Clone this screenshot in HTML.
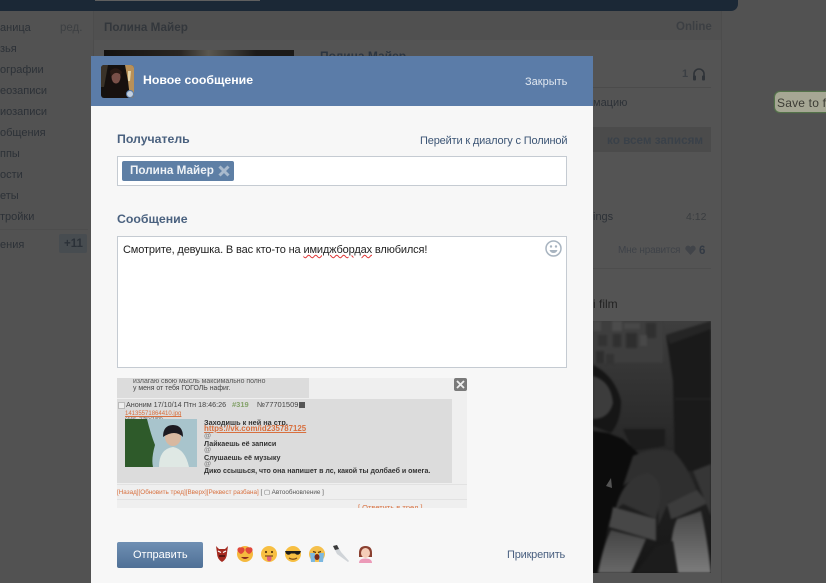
<!DOCTYPE html>
<html><head><meta charset="utf-8">
<style>
html,body{margin:0;padding:0;background:#525252}
#p{position:relative;width:826px;height:583px;overflow:hidden;background:#525252;font-family:"Liberation Sans",sans-serif;font-size:11px;color:#333}
#p div,#p span.a{position:absolute;white-space:nowrap}
.s{color:#2c3137;font-size:11px;line-height:14px}
.b{font-weight:bold}
.m{line-height:12px;white-space:nowrap}
</style></head><body>
<div id="p">
<!-- background page -->
<div style="left:0;top:0;width:738px;height:11px;background:#1b2836;border-radius:0 0 7px 0"></div>
<div style="left:95px;top:0;width:165px;height:1px;background:#5f5f5f"></div>
<div style="left:93px;top:11px;width:629px;height:572px;background:#545454;border-right:1px solid #4c4c4c;border-left:1px solid #4c4c4c;box-sizing:border-box"></div>
<div style="left:94px;top:11px;width:627px;height:29px;background:#505050"></div>
<div class="b" style="left:104px;top:20px;color:#33373c;font-size:11.700px;line-height:15px">Полина Майер</div>
<div class="b" style="left:676px;top:20px;color:#3c3f43;font-size:11.500px;line-height:15px">Online</div>
<div style="left:104px;top:50px;width:190px;height:10px;background:linear-gradient(90deg,#141210,#2a2622 40%,#5a574f 55%,#1c1a18 80%)"></div>
<div class="b" style="left:320px;top:49px;color:#2c3540;font-size:12px;line-height:15px">Полина Майер</div>
<div class="b" style="left:682px;top:67px;color:#3b3f44;font-size:11px;line-height:14px">1</div>
<svg style="position:absolute;left:692px;top:67px" width="14" height="15" viewBox="0 0 14 15"><path d="M2 12V7a5 5 0 0 1 10 0v5" fill="none" stroke="#2f3338" stroke-width="1.600"/><rect x="1" y="8.500" width="3" height="5" rx="1" fill="#2f3338"/><rect x="10" y="8.500" width="3" height="5" rx="1" fill="#2f3338"/></svg>
<div style="left:320px;top:87px;width:391px;height:1px;background:#4b4b4b"></div>
<div class="s" style="left:593px;top:96px">мацию</div>
<div style="left:593px;top:127px;width:118px;height:25px;background:#4b4b4b"></div>
<div class="b" style="left:607px;top:134px;color:#3a4149;font-size:11.700px;line-height:14px">ко всем записям</div>
<div class="s" style="left:593px;top:210px">ings</div>
<div class="s" style="left:686px;top:210px;color:#3a3d40;font-size:10.500px">4:12</div>
<div style="left:618px;top:244px;color:#3e4248;font-size:10px;letter-spacing:-.2px;line-height:14px">Мне нравится</div>
<svg style="position:absolute;left:685px;top:245px" width="11" height="10" viewBox="0 0 11 10"><path d="M5.500 10L.7 4.800A2.700 2.700 0 0 1 5.500 2a2.700 2.700 0 0 1 4.800 2.800z" fill="#414449"/></svg>
<div class="b" style="left:699px;top:244px;color:#333a44;font-size:11.500px;line-height:14px">6</div>
<div style="left:320px;top:268px;width:391px;height:1px;background:#4d4d4d"></div>
<div class="s" style="left:593px;top:297px;color:#222;font-size:12px">i film</div>
<!-- photo -->
<svg style="position:absolute;left:593px;top:321px" width="118" height="252" viewBox="0 0 118 252">
<defs>
<linearGradient id="g1" x1="0" y1="0" x2="0" y2="1"><stop offset="0" stop-color="#3e3e3e"/><stop offset=".35" stop-color="#2e2e2e"/><stop offset=".65" stop-color="#212121"/><stop offset="1" stop-color="#161616"/></linearGradient>
<linearGradient id="l1" x1="0" y1="0" x2="0" y2="1"><stop offset="0" stop-color="#444"/><stop offset="1" stop-color="#686868"/></linearGradient>
<linearGradient id="l2" x1="0" y1="0" x2="0" y2="1"><stop offset="0" stop-color="#484848"/><stop offset="1" stop-color="#7c7c7c"/></linearGradient>
<filter id="f" color-interpolation-filters="sRGB"><feGaussianBlur stdDeviation="1.100"/></filter>
</defs>
<rect width="118" height="252" fill="url(#g1)"/>
<g filter="url(#f)">
<rect x="0" y="0" width="70" height="42" fill="#3e3e3e"/>
<rect x="0" y="0" width="8" height="10" fill="#4a4a4a"/><rect x="19" y="0" width="10" height="10" fill="#4c4c4c"/><rect x="31" y="2" width="16" height="6" fill="#484848"/><rect x="53" y="2" width="10" height="15" fill="#303030"/>
<rect x="20" y="13" width="8" height="13" fill="#303030"/><rect x="33" y="12" width="11" height="15" fill="#2e2e2e"/><rect x="47" y="14" width="7" height="11" fill="#484848"/><rect x="5" y="14" width="9" height="11" fill="#333"/><rect x="3" y="30" width="8" height="12" fill="#2e2e2e"/><rect x="13" y="33" width="8" height="10" fill="#333"/>
<path d="M73 14L118 0V150H82L80 60z" fill="#1a1a1a"/><path d="M73 14L118 0V8L77 23z" fill="#252525"/>
<path d="M82 78H118" stroke="#232323" stroke-width="1.500"/>
<path d="M30 108H72V125L40 130z" fill="#1c1c1c"/>
<path d="M0 44Q22 55 28 80Q28 100 18 112L0 105z" fill="#161616"/>
<path d="M0 55Q18 60 20 82Q16 98 0 98z" fill="#3c3c3c"/>
<path d="M0 110L15 112L30 118L48 135L40 170L16 200L6 252H0z" fill="#0c0c0c"/>
<path d="M40 135Q60 125 80 130Q95 145 104 170L75 182L65 205Q68 160 45 155L30 165z" fill="#2f2f2f"/>
<path d="M22 190Q30 155 55 152Q70 158 67 180L63 198L30 183z" fill="#333"/>
<path d="M20 186L63 198L63 220L16 206z" fill="#474747"/>
<path d="M74 183L104 169L115 182L85 196L78 198z" fill="#3c3c3c"/>
<path d="M5 252Q10 225 18 209L53 218Q46 235 38 252z" fill="url(#l1)"/>
<path d="M78 252Q76 215 84 198L108 190Q114 215 118 252z" fill="url(#l2)"/>
<path d="M63 225L80 220L85 252H42z" fill="#1c1c1c"/>
<path d="M100 150L118 143V195L112 180z" fill="#363636"/>
</g>
<path d="M13 165l5-8 1 10z" fill="#666" opacity=".8"/>
</svg>
<!-- sidebar -->
<div class="s" style="left:0;top:21px">аница</div>
<div class="s" style="left:60px;top:21px;color:#3c3f42;font-size:11.500px">ред.</div>
<div class="s" style="left:0;top:42px">зья</div>
<div class="s" style="left:0;top:63px">ографии</div>
<div class="s" style="left:0;top:84px">еозаписи</div>
<div class="s" style="left:0;top:105px">иозаписи</div>
<div class="s" style="left:0;top:126px">общения</div>
<div class="s" style="left:0;top:147px">ппы</div>
<div class="s" style="left:0;top:168px">ости</div>
<div class="s" style="left:0;top:189px">еты</div>
<div class="s" style="left:0;top:210px">тройки</div>
<div style="left:0;top:229px;width:88px;height:1px;background:#4d4d4d"></div>
<div class="s" style="left:0;top:238px">ения</div>
<div style="left:59px;top:234px;width:28px;height:19px;background:#474c50;border-radius:2px"></div>
<div class="b" style="left:64px;top:237px;color:#2b3138;font-size:11.500px;line-height:14px">+11</div>
<!-- tooltip -->
<div style="left:775px;top:92px;width:60px;height:20px;background:#a6a794;border-radius:5px;box-shadow:0 0 1px 1px #557a4a"></div>
<div style="left:777px;top:96px;color:#3c3c34;font-size:12px;line-height:14px;letter-spacing:.2px">Save to fi</div>
<!-- modal -->
<div style="left:91px;top:56px;width:502px;height:527px;background:#f7f7f7"></div>
<div style="left:91px;top:56px;width:502px;height:50px;background:#5b7ca8"></div>
<svg style="position:absolute;left:101px;top:65px;border-radius:3px" width="33" height="33" viewBox="0 0 33 33">
<rect width="33" height="33" fill="#15110f"/>
<path d="M24 0H33V33H29L27 16z" fill="#b89058"/><path d="M0 0H7L3 22H0z" fill="#3a3228"/><path d="M27 6l3 0l-1 10l-2 0z" fill="#e4d4a8"/>
<path d="M6 33Q4 12 9 4Q16 -2 23 5Q27 14 25 33z" fill="#17100e"/>
<ellipse cx="15" cy="12" rx="4.500" ry="6.500" fill="#7a5048"/><path d="M9 6Q15 0 21 7L20 10Q14 5 10 12z" fill="#2a1a14"/>
</svg>
<div style="left:126px;top:90px;width:8px;height:8px;border-radius:50%;background:#c4d0e0;border:1px solid #5b7ca8;box-sizing:border-box"></div>
<div class="b" style="left:143px;top:72px;color:#fff;font-size:12.300px;line-height:16px">Новое сообщение</div>
<div style="left:525px;top:75px;color:#e0e7f0;font-size:11px;line-height:14px">Закрыть</div>
<div class="b" style="left:117px;top:131px;color:#4a617f;font-size:12.300px;line-height:16px">Получатель</div>
<div style="left:420px;top:134px;color:#3c5575;font-size:11px;line-height:14px;letter-spacing:-.16px">Перейти к диалогу с Полиной</div>
<div style="left:117px;top:156px;width:450px;height:30px;background:#fff;border:1px solid #c5cbd2;box-sizing:border-box"></div>
<div style="left:122px;top:161px;width:112px;height:20px;background:#5e7fa5;border-radius:2px"></div>
<div class="b" style="left:130px;top:164px;color:#eef2f6;font-size:11.700px;line-height:14px">Полина Майер</div>
<svg style="position:absolute;left:218px;top:165px" width="12" height="12" viewBox="0 0 12 12"><path d="M1.500 1.500L10.500 10.500M10.500 1.500L1.500 10.500" stroke="#a9bacd" stroke-width="3"/></svg>
<div class="b" style="left:117px;top:211px;color:#4a617f;font-size:12.300px;line-height:16px">Сообщение</div>
<div style="left:117px;top:236px;width:450px;height:132px;background:#fff;border:1px solid #c5cbd2;box-sizing:border-box"></div>
<div style="left:123px;top:243px;color:#222;font-size:11px;line-height:14px;letter-spacing:-.14px">Смотрите, девушка. В вас кто-то на <span style="text-decoration:underline wavy #d33;text-decoration-thickness:1px">имиджбордах</span> влюбился!</div>
<svg style="position:absolute;left:545px;top:240px" width="17" height="17" viewBox="0 0 17 17"><circle cx="8.500" cy="8.500" r="7.500" fill="none" stroke="#a8b4c0" stroke-width="1.500"/><circle cx="6" cy="6.500" r="1.200" fill="#a8b4c0"/><circle cx="11" cy="6.500" r="1.200" fill="#a8b4c0"/><path d="M4.500 10h8q-1 3-4 3t-4-3z" fill="#a8b4c0"/></svg>
<!-- attached screenshot -->
<div style="left:117px;top:378px;width:350px;height:130px;background:#efefef;overflow:hidden">
<div style="left:0;top:0;width:192px;height:20px;background:#dcdcdc"></div>
<div class="m" style="left:16px;top:0;font-size:6.900px;color:#555;line-height:8px">излагаю свою мысль максимально полно</div>
<div class="m" style="left:16px;top:7px;font-size:6.900px;color:#444;line-height:8px">у меня от тебя ГОГОЛЬ нафиг.</div>
<div style="left:0;top:21px;width:335px;height:84px;background:#dcdcdc"></div>
<div style="left:1px;top:24px;width:5px;height:5px;background:#eee;border:1px solid #bbb"></div>
<div class="m" style="left:9px;top:21px;font-size:7.200px;color:#444;line-height:12px">Аноним 17/10/14 Птн 18:46:26</div>
<div class="m b" style="left:115px;top:21px;font-size:7.500px;color:#84a26a;line-height:12px">#319</div>
<div class="m" style="left:140px;top:21px;font-size:7.500px;color:#444;line-height:12px">№77701509</div>
<div style="left:182px;top:24px;width:6px;height:6px;background:#555"></div>
<div class="m" style="left:8px;top:33px;font-size:6px;color:#d8703f;line-height:7px;text-decoration:underline">14135571864410.jpg</div>
<div class="m" style="left:8px;top:39px;font-size:5.500px;color:#666;line-height:6px">(446, 275)(183)</div>
<svg style="position:absolute;left:8px;top:41px" width="72" height="48" viewBox="0 0 72 48"><rect width="72" height="48" fill="#a8c4cc"/><path d="M0 0H22Q26 16 30 26Q26 40 28 48H0z" fill="#2e5a2a"/><path d="M34 48Q34 30 48 28Q60 30 64 48z" fill="#dfe8e4"/><ellipse cx="48" cy="18" rx="8" ry="9" fill="#d8b8a0"/><path d="M38 18Q38 6 48 6Q58 6 58 18Q50 10 38 18z" fill="#1c1a20"/></svg>
<div class="m b" style="left:87px;top:40px;font-size:7.300px;color:#333;line-height:9px">Заходишь к ней на стр.</div>
<div class="m b" style="left:87px;top:46px;font-size:7.900px;color:#d8703f;line-height:9px;text-decoration:underline">https://vk.com/id235787125</div>
<div class="m" style="left:87px;top:55px;font-size:7px;color:#777;line-height:8px">@</div>
<div class="m b" style="left:87px;top:61px;font-size:7.200px;color:#333;line-height:9px">Лайкаешь её записи</div>
<div class="m" style="left:87px;top:69px;font-size:7px;color:#777;line-height:8px">@</div>
<div class="m b" style="left:87px;top:75px;font-size:7.200px;color:#333;line-height:9px">Слушаешь её музыку</div>
<div class="m" style="left:87px;top:83px;font-size:7px;color:#777;line-height:8px">@</div>
<div class="m b" style="left:87px;top:89px;font-size:7.050px;color:#333;line-height:9px">Дико ссышься, что она напишет в лс, какой ты долбаеб и омега.</div>
<div style="left:0;top:106px;width:350px;height:1px;background:#e2e2e2"></div>
<div class="m" style="left:0;top:110px;font-size:6.300px;color:#d8703f;line-height:9px">[Назад][Обновить тред][Вверх][Реквест разбана] <span style="color:#555">[ ▢ Автообновление ]</span></div>
<div style="left:0;top:121px;width:350px;height:1px;background:#e2e2e2"></div>
<div class="m" style="left:241px;top:125px;font-size:7.500px;color:#d8703f;line-height:10px">[ Ответить в тред ]</div>
</div>
<div style="left:454px;top:378px;width:13px;height:13px;background:#7a7a7a;border-radius:2px"></div>
<svg style="position:absolute;left:456px;top:380px" width="9" height="9" viewBox="0 0 9 9"><path d="M1 1L8 8M8 1L1 8" stroke="#eee" stroke-width="1.800"/></svg>
<!-- footer -->
<div style="left:117px;top:542px;width:86px;height:26px;background:linear-gradient(#6f8fb3,#4f7096);border-radius:2px"></div>
<div style="left:133px;top:548px;color:#fff;font-size:11px;line-height:14px">Отправить</div>
<svg style="position:absolute;left:213px;top:544px" width="175" height="20" viewBox="0 0 175 20">
<path d="M3 2L6 5H12L15 2L14 9Q14 15 9 18Q4 15 4 9z" fill="#a42a20"/><path d="M5 7L8 8.500M13 7L10 8.500" stroke="#fff" stroke-width="1.200"/><path d="M6 12H12" stroke="#40100c" stroke-width="1.500"/>
<circle cx="32" cy="10" r="8" fill="#f5b93e"/><path d="M28 3.500c-2-1-4 1-3.500 3 .5 1.500 2 3 3.500 3.500 1.500-.5 3-2 3.500-3.500.5-2-1.500-4-3.500-3zM36 3.500c-2-1-4 1-3.500 3 .5 1.500 2 3 3.500 3.500 1.500-.5 3-2 3.500-3.500.5-2-1.500-4-3.500-3z" fill="#e0483a"/><path d="M28 13q4 4 8 0z" fill="#8a2a1e"/>
<circle cx="56" cy="10" r="8" fill="#f7bf42"/><circle cx="53" cy="8" r="1.100" fill="#5a3a10"/><circle cx="59" cy="8" r="1.100" fill="#5a3a10"/><path d="M52 12H60" stroke="#7a4a18" stroke-width="1.200"/><path d="M54 12.500h4.500v2.500a2.200 2.200 0 0 1-4.500 0z" fill="#e0607a"/>
<circle cx="80" cy="10" r="8" fill="#f7bf42"/><path d="M72 7H88L87 9.500Q84.500 12 82 9.500H78Q75.500 12 73 9.500z" fill="#1c1c1c"/><path d="M76 14q4 2.500 8 0" stroke="#7a4a18" stroke-width="1.200" fill="none"/>
<circle cx="104" cy="10" r="8" fill="#f5c04c"/><path d="M97 9h5v9h-4zM106 9h5l-1 9h-4z" fill="#7cb8e0"/><path d="M100 7.500l3 1M108 7.500l-3 1" stroke="#5a3a10" stroke-width="1.200"/><ellipse cx="104" cy="13" rx="2.500" ry="3" fill="#7a2a18"/>
<path d="M120 2L124 1L128 8L136 17L135 18L124 10z" fill="#d0d4d8"/><path d="M120 2L124 1L126 5L122 6z" fill="#3a3a3a"/>
<path d="M146 9Q146 2 152.500 2Q159 2 159 9V13H146z" fill="#8a4030"/><ellipse cx="152.500" cy="9" rx="4.500" ry="5" fill="#f5cdb8"/><path d="M146 19Q146 14.500 152.500 14.500Q159 14.500 159 19z" fill="#ec9ab8"/>
</svg>
<div style="left:507px;top:548px;color:#4a6080;font-size:11px;line-height:14px;letter-spacing:-.2px">Прикрепить</div>
</div>
</body></html>
